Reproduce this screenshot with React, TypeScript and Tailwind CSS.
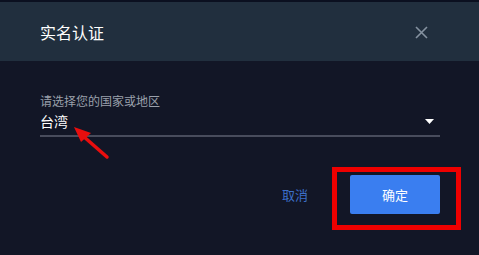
import React from "react";

export default function App() {
  const font = { fontFamily: '"Noto Sans CJK SC", "Noto Sans", sans-serif' };
  return (
    <div className="relative w-[479px] h-[255px] overflow-hidden bg-[#121626]" style={font}>
      <div className="h-[2px] bg-[#0b1020]" />
      <div className="h-[59px] bg-[#212f3e] flex items-center justify-between pl-10 pr-[51px]">
        <span className="text-[16px] text-white leading-none">实名认证</span>
        <svg width="13" height="13" viewBox="0 0 13 13" className="mt-[1px]">
          <path d="M1 1L12 12M12 1L1 12" stroke="#8592a0" strokeWidth="1.6" />
        </svg>
      </div>
      <div className="pl-10 pr-[39px] pt-8">
        <div className="text-[12px] leading-4 text-[#9aa0ab]">请选择您的国家或地区</div>
        <div className="mt-[2px] flex items-center justify-between border-b-2 border-[#484c5c] pb-1">
          <span className="text-[14px] leading-5 text-white">台湾</span>
          <svg width="9" height="5" viewBox="0 0 9 5" className="mr-[6px]">
            <path d="M0 0H9L4.5 5Z" fill="#ffffff" />
          </svg>
        </div>
        <div className="mt-[38px] flex items-center justify-end gap-[42px]">
          <span className="text-[13px] text-[#3c6fc8]">取消</span>
          <button className="w-[90px] h-[39px] rounded-[2px] bg-[#3a7ef0] text-white text-[13px]">确定</button>
        </div>
      </div>
      <div className="absolute left-[332px] top-[167px] w-[129px] h-[63px] border-[5px] border-[#ee0000]" />
      <svg className="absolute left-0 top-0" width="479" height="255">
        <line x1="107" y1="157" x2="83" y2="136" stroke="#e80e0e" strokeWidth="3.5" strokeLinecap="round" />
        <path d="M74 127L91 133L81 142Z" fill="#e80e0e" />
      </svg>
    </div>
  );
}
